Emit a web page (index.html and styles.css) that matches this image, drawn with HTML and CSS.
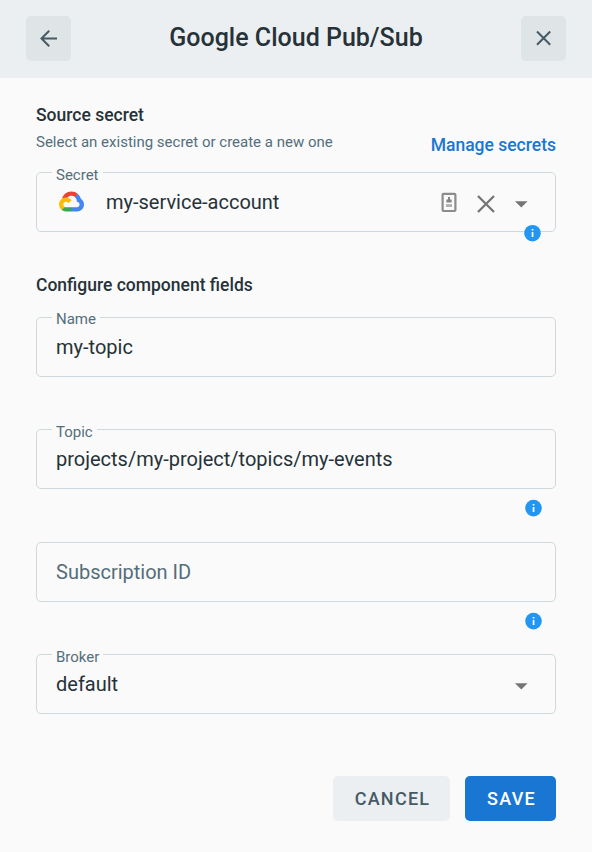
FILE: index.html
```
<!DOCTYPE html>
<html lang="en">
<head>
<meta charset="utf-8">
<title>Google Cloud Pub/Sub</title>
<link rel="stylesheet" href="styles.css">
</head>
<body>
<header class="header">
  <button class="icon-button" aria-label="Back">
    <svg width="18" height="18" viewBox="0 0 18 18" fill="none" stroke="currentColor" stroke-width="2"><path d="M17 8.5H2M9.2.8 1.5 8.5l7.7 7.7"/></svg>
  </button>
  <h1 class="title">Google Cloud Pub/Sub</h1>
  <button class="icon-button" aria-label="Close">
    <svg width="17" height="17" viewBox="0 0 17 17" fill="none" stroke="currentColor" stroke-width="2"><path d="M2 1.5 15.2 14.7M15.2 1.5 2 14.7"/></svg>
  </button>
</header>
<main class="content">
  <section class="intro">
    <div>
      <h2 class="heading">Source secret</h2>
      <p class="subtitle">Select an existing secret or create a new one</p>
    </div>
    <a class="link">Manage secrets</a>
  </section>

  <div class="field">
    <span class="label">Secret</span>
    <svg class="cloud" width="25" height="21" viewBox="0 0 256 206">
      <path fill="#EA4335" d="M170.25 56.82 192.5 34.57l1.49-9.37C153.44-11.68 88.98-7.5 52.42 33.92 42.27 45.42 34.73 59.76 30.72 74.57l7.97-1.12 44.5-7.34 3.44-3.51c19.8-21.75 53.27-24.67 76.13-6.17z"/>
      <path fill="#4285F4" d="M224.2 73.92A97 97 0 0 0 193.99 25.2l-31.23 31.23a56 56 0 0 1 20.37 44.04v5.54c15.36 0 27.8 12.45 27.8 27.8 0 15.35-12.44 27.48-27.8 27.48h-55.67L122 167.22v33.34l5.46 5.24h55.67c39.93.3 72.56-31.5 72.87-71.43.19-24.2-11.75-46.89-31.8-60.45"/>
      <path fill="#34A853" d="M71.87 205.8h55.59v-44.51H71.87c-3.96 0-7.8-.85-11.4-2.5l-7.89 2.42-22.4 22.25-1.96 7.58c12.57 9.49 27.9 14.83 43.65 14.76"/>
      <path fill="#FBBC05" d="M71.87 61.43C31.94 61.66-.24 94.23 0 134.16a72 72 0 0 0 28.22 56.88l32.25-32.25c-13.99-6.32-20.21-22.78-13.89-36.77s22.79-20.21 36.78-13.89c6.16 2.78 11.1 7.72 13.89 13.89l32.24-32.25a72 72 0 0 0-57.62-28.34"/>
    </svg>
    <span class="value">my-service-account</span>
    <svg class="key" width="16" height="20" viewBox="0 0 16 20"><rect x="1.6" y="1.8" width="12.8" height="17.2" rx="1" fill="none" stroke="#8c8c8c" stroke-width="2.2"/><path fill="#858585" d="M7 5h2v2.5h1.6v3H5.4v-3H7z"/><path fill="#b0b0b0" d="M5 12.1h6V15H5z"/></svg>
    <svg class="clear" width="18" height="18" viewBox="0 0 18 18" fill="none" stroke="#757575" stroke-width="2.3"><path d="m1 1 16 16M17 1 1 17"/></svg>
    <svg class="caret" width="13" height="7" viewBox="0 0 13 7"><path fill="#757575" d="M0 .3h12.6L6.3 6.6z"/></svg>
    <span class="info info-overlap"><svg width="17" height="17" viewBox="0 0 17 17"><circle cx="8.5" cy="8.2" r="8.3" fill="#2196f3"/><path fill="#fff" d="M7.7 4h1.7v1.5H7.7zM7.7 7h1.7v5H7.7z"/></svg></span>
  </div>

  <h2 class="heading section-heading">Configure component fields</h2>

  <div class="fields">
    <div class="field">
      <span class="label">Name</span>
      <span class="value">my-topic</span>
    </div>
    <div class="field">
      <span class="label">Topic</span>
      <span class="value">projects/my-project/topics/my-events</span>
      <span class="info"><svg width="17" height="17" viewBox="0 0 17 17"><circle cx="8.5" cy="8.1" r="8.3" fill="#2196f3"/><path fill="#fff" d="M7.7 4h1.7v1.5H7.7zM7.7 7h1.7v5H7.7z"/></svg></span>
    </div>
    <div class="field">
      <span class="value placeholder">Subscription ID</span>
      <span class="info"><svg width="17" height="17" viewBox="0 0 17 17"><circle cx="8.5" cy="8.1" r="8.3" fill="#2196f3"/><path fill="#fff" d="M7.7 4h1.7v1.5H7.7zM7.7 7h1.7v5H7.7z"/></svg></span>
    </div>
    <div class="field">
      <span class="label">Broker</span>
      <span class="value">default</span>
      <svg class="caret" width="13" height="7" viewBox="0 0 13 7"><path fill="#757575" d="M0 .3h12.6L6.3 6.6z"/></svg>
    </div>
  </div>

  <footer class="actions">
    <button class="button cancel">CANCEL</button>
    <button class="button save">SAVE</button>
  </footer>
</main>
</body>
</html>
```

FILE: styles.css
```
* {
  box-sizing: border-box;
}

body {
  margin: 0;
  height: 852px;
  overflow: hidden;
  background: #fafafa;
  color: #263238;
  font-family: Roboto, sans-serif;
}

h1, h2, p {
  margin: 0;
  font-weight: 500;
}

svg {
  display: block;
  flex: none;
  overflow: visible;
}

button {
  border: 0;
  padding: 0;
  font-family: inherit;
}

.header {
  height: 78px;
  padding: 16px 26px 17px;
  display: flex;
  justify-content: space-between;
  background: #eceff1;
}

.icon-button {
  width: 45px;
  height: 45px;
  display: flex;
  align-items: center;
  justify-content: center;
  border-radius: 5px;
  background: #dfe4e7;
  color: #455a64;
}

.title {
  font-size: 25px;
  line-height: 44px;
}

.content {
  padding: 25px 36px 0;
}

.intro {
  height: 69px;
  display: flex;
  justify-content: space-between;
}

.heading {
  font-size: 17.5px;
  line-height: 24px;
}

.subtitle {
  margin-top: 5px;
  font-size: 15px;
  line-height: 20px;
  font-weight: 400;
  color: #546e7a;
}

.link {
  margin-top: 30px;
  font-size: 17.5px;
  line-height: 24px;
  font-weight: 500;
  color: #1976d2;
}

.field {
  position: relative;
  height: 60px;
  display: flex;
  align-items: center;
  padding: 0 27.5px 0 19px;
  border: 1px solid #cfd8dc;
  border-radius: 5px;
}

.label {
  position: absolute;
  left: 15px;
  top: -8px;
  padding: 0 4px;
  font-size: 15px;
  line-height: 20px;
  color: #546e7a;
  background: #fafafa;
}

.fields .label {
  top: -8.6px;
}

.value {
  flex: 1;
  font-size: 20px;
  line-height: 30px;
}

.placeholder {
  color: #546e7a;
}

.cloud {
  margin: 0 22px 1px 3px;
}

.key {
  margin-right: 19.5px;
}

.clear {
  margin: 3px 20px 0 0;
}

.caret {
  margin: 4px 0 0;
}

.info {
  position: absolute;
  right: 13px;
  top: 69px;
}

.info-overlap {
  right: 14px;
  top: 52px;
}

.section-heading {
  margin-top: 41px;
}

.fields {
  margin-top: 20px;
  display: grid;
  row-gap: 52.4px;
}

.fields .info {
  top: 69.9px;
}

.actions {
  margin-top: 61.8px;
  display: flex;
  justify-content: flex-end;
  gap: 15px;
}

.button {
  height: 45px;
  padding-left: 2px;
  border-radius: 5px;
  font-size: 18px;
  font-weight: 500;
  letter-spacing: 1.25px;
}

.cancel {
  width: 117px;
  background: #eceff1;
  color: #455a64;
}

.save {
  width: 91px;
  background: #1976d2;
  color: #fff;
}
```
